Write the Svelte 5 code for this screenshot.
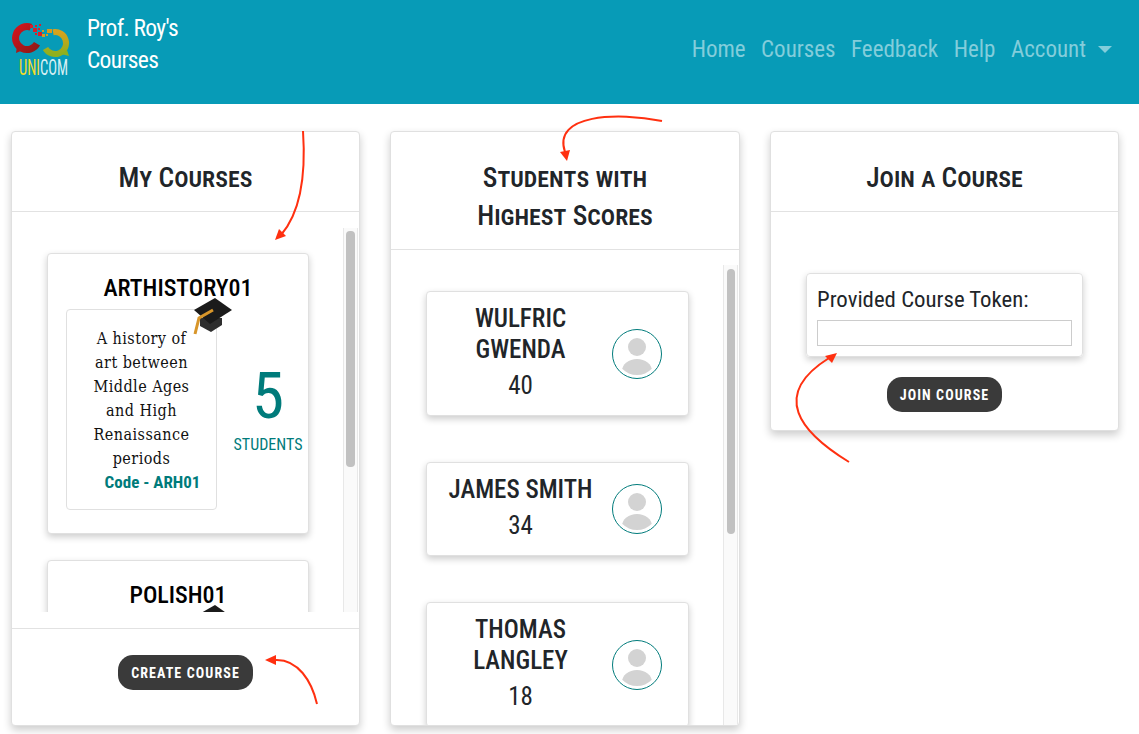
<script>
	const courses = [
		{ name: 'ARTHISTORY01', text: 'A history of art between Middle Ages and High Renaissance periods', code: 'ARH01', students: 5 },
		{ name: 'POLISH01', text: 'An introduction to Polish grammar and speech for beginners', code: 'POL01', students: 3 }
	];
	const scores = [
		{ name: 'WULFRIC GWENDA', score: 40 },
		{ name: 'JAMES SMITH', score: 34 },
		{ name: 'THOMAS LANGLEY', score: 18 }
	];
</script>

<header>
	<div class="brand">
		<svg class="logo" width="60" height="56" viewBox="0 0 60 56">
			<defs>
				<linearGradient id="red" x1="0" y1="0" x2="1" y2="1">
					<stop offset="0" stop-color="#d2141c" />
					<stop offset="1" stop-color="#8e1a18" />
				</linearGradient>
				<linearGradient id="green" x1="0" y1="0" x2="0" y2="1">
					<stop offset="0" stop-color="#d8a21c" />
					<stop offset="1" stop-color="#8fb01e" />
				</linearGradient>
			</defs>
			<path d="M19.9 6.2A11.5 11.5 0 1 0 26 22.8" fill="none" stroke="url(#red)" stroke-width="7" />
			<path d="M6 25l-1 7 7-3z" fill="#a81a1a" />
			<path d="M42.1 11.2A11 11 0 1 1 34.5 27.5" fill="none" stroke="url(#green)" stroke-width="6" />
			<path d="M50 33l8 2-2-6z" fill="#8fb01e" />
			<g fill="#d8202a">
				<rect x="19" y="4" width="3" height="3" />
				<rect x="24" y="4" width="2" height="2" />
				<rect x="28" y="3" width="2" height="2" />
				<rect x="22" y="7" width="4" height="4" />
				<rect x="27" y="7" width="2" height="2" />
				<rect x="27" y="11" width="4" height="4" />
				<rect x="24" y="12" width="2" height="2" />
			</g>
			<g fill="#d89a20">
				<rect x="31" y="9" width="2" height="2" />
				<rect x="31" y="13" width="3" height="3" />
				<rect x="36" y="8" width="5" height="4" />
				<rect x="35" y="13" width="2" height="2" />
			</g>
			<text class="uni" x="8" y="54" textLength="49" lengthAdjust="spacingAndGlyphs">UNI<tspan class="com">COM</tspan></text>
		</svg>
		<div class="title">Prof. Roy's<br />Courses</div>
	</div>
	<nav>
		<a href="#home">Home</a>
		<a href="#courses">Courses</a>
		<a href="#feedback">Feedback</a>
		<a href="#help">Help</a>
		<a href="#account">Account<span class="caret"></span></a>
	</nav>
</header>

<main>
	<section class="panel">
		<h2>My Courses</h2>
		<div class="pane courses">
			<div class="list">
				{#each courses as c}
					<article class="course">
						<h3>{c.name}</h3>
						<div class="course-row">
							<div class="about">
								<svg class="cap" width="42" height="40" viewBox="0 0 42 40">
									<path d="M8 21h22v7l-11 7-11-6z" fill="#2e2e2e" />
									<path d="M2 13L23 1l17 12-22 14z" fill="#1b1b1b" />
									<path d="M21 13L7 21 3 37" fill="none" stroke="#d8962a" stroke-width="3" />
								</svg>
								<p>{c.text}</p>
								<b>Code - {c.code}</b>
							</div>
							<div class="stat">
								<span class="count">{c.students}</span>
								<span class="label">STUDENTS</span>
							</div>
						</div>
					</article>
				{/each}
			</div>
			<div class="track"><div class="thumb"></div></div>
		</div>
		<div class="foot">
			<button>CREATE COURSE</button>
		</div>
	</section>

	<section class="panel">
		<h2>Students with<br />Highest Scores</h2>
		<div class="pane students">
			<div class="list">
				{#each scores as s}
					<article class="student">
						<div class="who">
							<div class="name">{s.name}</div>
							<div class="score">{s.score}</div>
						</div>
						<svg class="avatar" width="50" height="50" viewBox="0 0 50 50">
							<defs>
								<clipPath id="round"><circle cx="25" cy="25" r="21" /></clipPath>
							</defs>
							<g fill="#d3d3d3">
								<circle cx="25" cy="18" r="9" />
								<ellipse cx="25" cy="42" rx="15" ry="12" clip-path="url(#round)" />
							</g>
							<circle cx="25" cy="25" r="24.5" fill="none" stroke="#007b7b" />
						</svg>
					</article>
				{/each}
			</div>
			<div class="track"><div class="thumb"></div></div>
		</div>
	</section>

	<section class="panel join">
		<h2>Join a Course</h2>
		<div class="join-body">
			<div class="token">
				<label for="token">Provided Course Token:</label>
				<input id="token" type="text" />
			</div>
			<button>JOIN COURSE</button>
		</div>
	</section>
</main>

<svg class="notes" width="1139" height="734" viewBox="0 0 1139 734">
	<g fill="none" stroke="#ff3010" stroke-width="2">
		<path d="M303 131C306 175 300 213 281 235" />
		<path d="M662 121C618 112 552 114 565 152" />
		<path d="M317 704C312 682 298 658 274 660" />
		<path d="M849 462C800 432 770 395 829 358" />
	</g>
	<g fill="#ff3010">
		<path d="M275 240l4-11 7 7z" />
		<path d="M567 161l-7-9 10-2z" />
		<path d="M265 660l11-5v10z" />
		<path d="M837 353l-5 10-7-7z" />
	</g>
</svg>

<style>
	:global(body) {
		overflow: hidden;
		height: 734px;
		background: #fff;
		font-family: Roboto, "Liberation Sans", sans-serif;
		font-stretch: 75%;
		color: #212529;
	}

	header {
		height: 104px;
		background: #079bb7;
		display: flex;
		justify-content: space-between;
		align-items: flex-start;
		box-sizing: border-box;
		padding: 0 27px 0 11px;
	}

	.brand {
		display: flex;
		align-items: flex-start;
		gap: 16px;
		padding-top: 12px;
	}

	.logo {
		margin-top: 9px;
	}

	.uni {
		font-size: 22px;
		fill: #f5dc28;
	}

	.com {
		fill: #d8f0f4;
	}

	.title {
		color: #fff;
		font-size: 23.5px;
		line-height: 32px;
		letter-spacing: -0.7px;
	}

	nav {
		display: flex;
		gap: 15.5px;
		padding-top: 35px;
		font-size: 23px;
		line-height: 30px;
	}

	nav a {
		color: #83cddb;
		text-decoration: none;
		white-space: nowrap;
	}

	.caret {
		display: inline-block;
		margin-left: 12px;
		vertical-align: 4px;
		border-top: 7px solid #83cddb;
		border-left: 7px solid transparent;
		border-right: 7px solid transparent;
	}

	main {
		display: grid;
		grid-template-columns: 349px 350px 349px;
		gap: 30px;
		padding: 27px 20px 0 11px;
		align-items: start;
	}

	.panel {
		height: 595px;
		box-sizing: border-box;
		background: #fff;
		border: 1px solid #e0e0e0;
		border-radius: 4px;
		box-shadow: 0 4px 8px rgba(0, 0, 0, 0.2);
		display: flex;
		flex-direction: column;
		overflow: hidden;
	}

	.panel.join {
		height: 300px;
	}

	h2 {
		margin: 0;
		padding: 27px 10px 14px;
		border-bottom: 1px solid #e2e2e2;
		text-align: center;
		font-size: 27.5px;
		line-height: 38px;
		font-weight: 500;
		font-variant: small-caps;
	}

	.pane {
		display: flex;
		min-height: 0;
	}

	.courses {
		margin-top: 16px;
		height: 384px;
	}

	.students {
		margin-top: 15px;
		flex: 1;
	}

	.list {
		flex: 1;
		overflow: hidden;
		padding: 25px 0 0 35px;
	}

	.students .list {
		padding-top: 26px;
	}

	.track {
		flex: none;
		width: 13px;
		margin-right: 1px;
		background: #fafafa;
		border-left: 1px solid #e8e8e8;
		border-right: 1px solid #e8e8e8;
		padding-top: 3px;
	}

	.thumb {
		width: 9px;
		height: 236px;
		margin-left: 2px;
		border-radius: 4px;
		background: #c1c1c1;
	}

	.students .thumb {
		height: 265px;
		margin-left: 3px;
		width: 8px;
	}

	.students .track {
		padding-top: 4px;
	}

	.course, .student {
		box-sizing: border-box;
		border: 1px solid #e0e0e0;
		border-radius: 4px;
		background: #fff;
		box-shadow: 0 3px 7px rgba(0, 0, 0, 0.2);
	}

	.course {
		width: 262px;
		height: 281px;
		margin-bottom: 26px;
		padding-top: 18px;
	}

	h3 {
		margin: 0;
		text-align: center;
		font-size: 24px;
		line-height: 32px;
		font-weight: 500;
		color: #000;
	}

	.course-row {
		display: flex;
		align-items: center;
		padding-left: 18px;
		margin-top: 5px;
	}

	.about {
		position: relative;
		box-sizing: border-box;
		width: 151px;
		height: 201px;
		border: 1px solid #e0e0e0;
		border-radius: 4px;
		padding-top: 17px;
		text-align: center;
		flex: none;
	}

	.cap {
		position: absolute;
		top: -13px;
		left: 125px;
	}

	.about p {
		width: 110px;
		margin: 0 auto;
		font-family: "DejaVu Serif", serif;
		font-stretch: 75%;
		font-size: 16px;
		line-height: 24px;
		letter-spacing: 0.45px;
		color: #111;
	}

	.about b {
		display: block;
		margin-top: -1px;
		padding-left: 22px;
		font-size: 17px;
		line-height: 24px;
		color: #007b7b;
		white-space: nowrap;
	}

	.stat {
		flex: 1;
		display: flex;
		flex-direction: column;
		align-items: center;
		color: #007b7b;
		padding: 0 0 2px 11px;
	}

	.count {
		font-size: 65px;
		line-height: 68px;
	}

	.label {
		margin-top: 4px;
		font-size: 16px;
		line-height: 22px;
		white-space: nowrap;
	}

	.student {
		width: 263px;
		margin-bottom: 46px;
		padding: 11px 26px 11px 0;
		display: flex;
		align-items: center;
	}

	.who {
		flex: 1;
		text-align: center;
		padding: 0 13px 0 15px;
	}

	.name {
		font-size: 25px;
		line-height: 31px;
		font-weight: 500;
	}

	.score {
		font-size: 25px;
		line-height: 36px;
		margin-top: 3px;
	}

	.avatar {
		flex: none;
	}

	.foot {
		margin-top: 16px;
		border-top: 1px solid #e2e2e2;
		flex: 1;
		display: flex;
		justify-content: center;
		padding-top: 26px;
	}

	button {
		height: 35px;
		padding: 0 13px;
		border: 0;
		border-radius: 15px;
		background: #3a3a3a;
		color: #fff;
		font-family: inherit;
		font-stretch: inherit;
		font-size: 14px;
		font-weight: 700;
		letter-spacing: 1.1px;
		align-self: flex-start;
	}

	.join-body {
		flex: 1;
		display: flex;
		flex-direction: column;
		align-items: center;
		padding-top: 61px;
		gap: 20px;
	}

	.join-body button {
		align-self: center;
	}

	.token {
		box-sizing: border-box;
		width: 277px;
		height: 84px;
		padding: 11px 10px 0;
		border: 1px solid #e0e0e0;
		border-radius: 4px;
		box-shadow: 0 3px 7px rgba(0, 0, 0, 0.2);
	}

	.token label {
		display: block;
		font-size: 22.8px;
		line-height: 30px;
		margin-bottom: 5px;
		white-space: nowrap;
	}

	.token input {
		display: block;
		box-sizing: border-box;
		width: 100%;
		height: 26px;
		border: 1px solid #ccc;
		outline: 0;
		padding: 0;
	}

	.notes {
		position: absolute;
		top: 0;
		left: 0;
		pointer-events: none;
	}
</style>
